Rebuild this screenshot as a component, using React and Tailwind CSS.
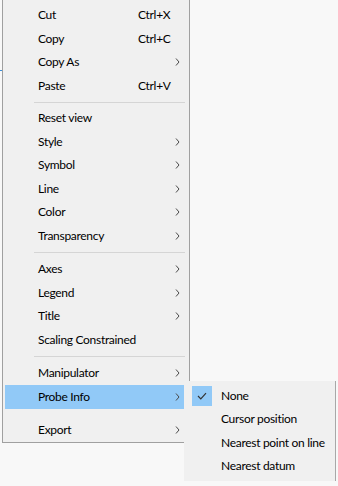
import React from "react";

const font = { fontFamily: 'Lato, "Noto Sans", sans-serif' };

const main = [
  { label: "Cut", shortcut: "Ctrl+X" },
  { label: "Copy", shortcut: "Ctrl+C" },
  { label: "Copy As", sub: true },
  { label: "Paste", shortcut: "Ctrl+V" },
  { sep: true, h: "h-[9px]" },
  { label: "Reset view" },
  { label: "Style", sub: true },
  { label: "Symbol", sub: true },
  { label: "Line", sub: true },
  { label: "Color", sub: true },
  { label: "Transparency", sub: true },
  { sep: true, h: "h-[10px]" },
  { label: "Axes", sub: true },
  { label: "Legend", sub: true },
  { label: "Title", sub: true },
  { label: "Scaling Constrained" },
  { sep: true, h: "h-[10px]" },
  { label: "Manipulator", sub: true },
  { label: "Probe Info", sub: true, active: true },
  { sep: true, h: "h-[10px]", hidden: true },
  { label: "Export", sub: true },
];

const probe = ["None", "Cursor position", "Nearest point on line", "Nearest datum"];

function Chevron() {
  return (
    <svg width="5" height="8" viewBox="0 0 5 8" className="ml-auto mr-[4px]">
      <path d="M1 0.5 L4 4 L1 7.5" fill="none" stroke="#4a4a4a" strokeWidth="1" />
    </svg>
  );
}

function Check() {
  return (
    <svg width="10" height="8" viewBox="0 0 10 8">
      <path d="M1 4 L3.8 6.8 L9 1.2" fill="none" stroke="#333" strokeWidth="1.2" />
    </svg>
  );
}

export default function App() {
  return (
    <div
      className="relative w-[338px] h-[486px] overflow-hidden bg-[#f8f8f8] text-[12px] tracking-[-0.3px] text-black"
      style={font}
    >
      <div className="absolute left-0 top-[70px] w-[2px] h-px bg-[#3b8fd9]" />

      <div className="absolute left-[2px] top-0 w-[188px] border-x border-b border-[#a0a0a0] bg-[#f0f0f0] pt-[3.5px]">
        {main.map((item, i) =>
          item.sep ? (
            <div key={i} className={`${item.h} flex items-center`}>
              {!item.hidden && <div className="ml-[31px] mr-[4px] h-px flex-1 bg-[#d5d5d5]" />}
            </div>
          ) : (
            <div
              key={i}
              className={`ml-[2px] mr-[5px] flex h-[23.5px] items-center pl-[33px] ${item.active ? "bg-[#91c9f7]" : ""}`}
            >
              <span className="w-[100px] whitespace-nowrap">{item.label}</span>
              {item.shortcut && <span>{item.shortcut}</span>}
              {item.sub && <Chevron />}
            </div>
          )
        )}
      </div>

      <div className="absolute left-[184px] top-[381px] w-[152px] h-[100px] border-r border-[#a8a8a8] bg-[#f0f0f0] pt-[3px]">
        {probe.map((p, i) => (
          <div key={p} className="flex h-[23.5px] items-center">
            <div className={`ml-[8px] flex h-[20px] w-[20px] items-center justify-center ${i === 0 ? "bg-[#91c9f7]" : ""}`}>
              {i === 0 && <Check />}
            </div>
            <span className="ml-[9px] whitespace-nowrap">{p}</span>
          </div>
        ))}
      </div>
    </div>
  );
}
